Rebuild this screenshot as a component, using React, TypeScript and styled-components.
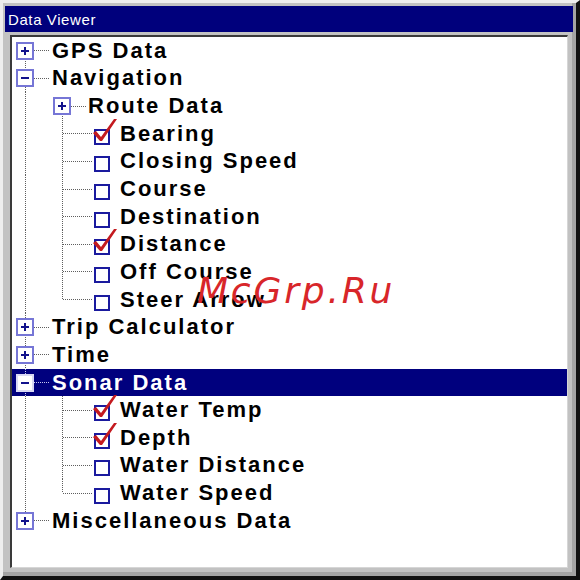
import React from 'react';
import styled, { createGlobalStyle } from 'styled-components';

const GlobalStyle = createGlobalStyle`
  html, body { margin: 0; padding: 0; background: #ffffff; }
  #root { width: 580px; height: 580px; }
`;

type Node = {
  label: string;
  level: 0 | 1;
  expander?: 'open' | 'closed';
  checked?: boolean;
  selected?: boolean;
  firstChild?: boolean;
  lastChild?: boolean;
};

const tree: Node[] = [
  { label: 'GPS Data', level: 0, expander: 'closed' },
  { label: 'Navigation', level: 0, expander: 'open' },
  { label: 'Route Data', level: 1, expander: 'closed', firstChild: true },
  { label: 'Bearing', level: 1, checked: true },
  { label: 'Closing Speed', level: 1 },
  { label: 'Course', level: 1 },
  { label: 'Destination', level: 1 },
  { label: 'Distance', level: 1, checked: true },
  { label: 'Off Course', level: 1 },
  { label: 'Steer Arrow', level: 1, lastChild: true },
  { label: 'Trip Calculator', level: 0, expander: 'closed' },
  { label: 'Time', level: 0, expander: 'closed' },
  { label: 'Sonar Data', level: 0, expander: 'open', selected: true },
  { label: 'Water Temp', level: 1, checked: true },
  { label: 'Depth', level: 1, checked: true },
  { label: 'Water Distance', level: 1 },
  { label: 'Water Speed', level: 1, lastChild: true },
  { label: 'Miscellaneous Data', level: 0, expander: 'closed' },
];

const Window = styled.div`
  position: relative;
  box-sizing: border-box;
  width: 580px;
  height: 580px;
  display: flex;
  flex-direction: column;
  background: #c2c2c2;
  border-style: solid;
  border-width: 3px 4px 4px 3px;
  border-color: #eeeeee #111111 #111111 #eeeeee;
  box-shadow: inset -4px -4px 0 #a4a4a4;
  padding: 3px 3px 8px 2px;
`;

const TitleBar = styled.div`
  flex: none;
  height: 26px;
  display: flex;
  align-items: center;
  padding-left: 3px;
  background: #00007c;
  color: #ffffff;
  font: 15px 'Liberation Sans', Arial, sans-serif;
  letter-spacing: 0.6px;
`;

const Panel = styled.div`
  flex: 1;
  margin: 3px 5px 0 5px;
  background: #ffffff;
  border-style: solid;
  border-width: 2px 1px 1px 2px;
  border-color: #3a3a3a #d6d6d6 #d6d6d6 #3a3a3a;
  display: flex;
  flex-direction: column;
`;

const Row = styled.div<{ $selected?: boolean }>`
  flex: none;
  height: 27.65px;
  display: flex;
  align-items: stretch;
  background: ${(p) => (p.$selected ? '#00007e' : 'transparent')};
  color: ${(p) => (p.$selected ? '#ffffff' : '#000000')};
`;

const dots = (dir: string, color: string) =>
  `repeating-linear-gradient(${dir}, ${color} 0 1px, transparent 1px 2px)`;

type BranchProps = {
  $w: number;
  $up?: boolean;
  $down?: boolean;
  $across?: boolean;
  $light?: boolean;
};

// One column of tree guides: a dotted vertical rail at 13px and an optional
// dotted branch running from the rail to the right edge of the column.
const branchLayers = (p: BranchProps) => {
  const c = p.$light ? '#c8c8ee' : '#5e5e5e';
  const layers: string[] = [];
  if (p.$up) layers.push(`${dots('to bottom', c)} 13px 0 / 1px 50% no-repeat`);
  if (p.$down) layers.push(`${dots('to bottom', c)} 13px 100% / 1px 50% no-repeat`);
  if (p.$across) layers.push(`${dots('to right', c)} 14px 50% / calc(100% - 14px) 1px no-repeat`);
  return layers.length ? layers.join(', ') : 'none';
};

const Branch = styled.div<BranchProps>`
  flex: none;
  box-sizing: border-box;
  width: ${(p) => p.$w}px;
  padding-left: 4px;
  display: flex;
  align-items: center;
  background: ${(p) => branchLayers(p)};
`;

const Expander = styled.span<{ $selected?: boolean }>`
  box-sizing: border-box;
  width: 18px;
  height: 18px;
  border: 2px solid ${(p) => (p.$selected ? '#d8d8f4' : '#7676d6')};
  background: #ffffff;
  display: flex;
  align-items: center;
  justify-content: center;
`;

const CheckBox = styled.span`
  position: relative;
  flex: none;
  box-sizing: border-box;
  width: 16px;
  height: 16px;
  margin: 6px 0 0 2px;
  align-self: center;
  border: 2px solid #1a1a9e;
  background: #ffffff;
`;

const Tick = styled.svg`
  position: absolute;
  left: -4px;
  top: -12px;
  overflow: visible;
`;

const Label = styled.span<{ $gap: number }>`
  align-self: center;
  margin-left: ${(p) => p.$gap}px;
  font: bold 22px 'Liberation Sans', Arial, sans-serif;
  letter-spacing: 2px;
  white-space: nowrap;
`;

const Watermark = styled.span`
  position: absolute;
  left: 194px;
  top: 270px;
  font: italic 36px 'DejaVu Sans', sans-serif;
  line-height: 36px;
  letter-spacing: 2.8px;
  color: #d8262a;
  pointer-events: none;
`;

const Sign = ({ open }: { open: boolean }) => (
  <svg width="8" height="8" viewBox="0 0 8 8">
    <rect x="0" y="3" width="8" height="2" fill="#12128c" />
    {!open && <rect x="3" y="0" width="2" height="8" fill="#12128c" />}
  </svg>
);

const RedTick = () => (
  <Tick width="26" height="26" viewBox="0 0 26 26">
    <polygon points="1,14 4,12 9,18 22,0 25,0 10,22 8,22" fill="#c41a1f" />
  </Tick>
);

const TreeRow = ({ node, index }: { node: Node; index: number }) => {
  const isFirst = index === 0;
  const isLast = index === tree.length - 1;

  if (node.level === 0) {
    return (
      <Row $selected={node.selected}>
        <Branch $w={38} $up={!isFirst} $down={!isLast} $across $light={node.selected}>
          <Expander $selected={node.selected}>
            <Sign open={node.expander === 'open'} />
          </Expander>
        </Branch>
        <Label $gap={2}>{node.label}</Label>
      </Row>
    );
  }

  return (
    <Row>
      <Branch $w={37} $up $down />
      {node.expander ? (
        <>
          <Branch $w={37} $up={!node.firstChild} $down={!node.lastChild} $across>
            <Expander>
              <Sign open={node.expander === 'open'} />
            </Expander>
          </Branch>
          <Label $gap={2}>{node.label}</Label>
        </>
      ) : (
        <>
          <Branch $w={43} $up={!node.firstChild} $down={!node.lastChild} $across />
          <CheckBox>{node.checked && <RedTick />}</CheckBox>
          <Label $gap={10}>{node.label}</Label>
        </>
      )}
    </Row>
  );
};

export default function App() {
  return (
    <>
      <GlobalStyle />
      <Window>
        <TitleBar>Data Viewer</TitleBar>
        <Panel>
          {tree.map((node, i) => (
            <TreeRow key={node.label} node={node} index={i} />
          ))}
        </Panel>
        <Watermark>McGrp.Ru</Watermark>
      </Window>
    </>
  );
}
